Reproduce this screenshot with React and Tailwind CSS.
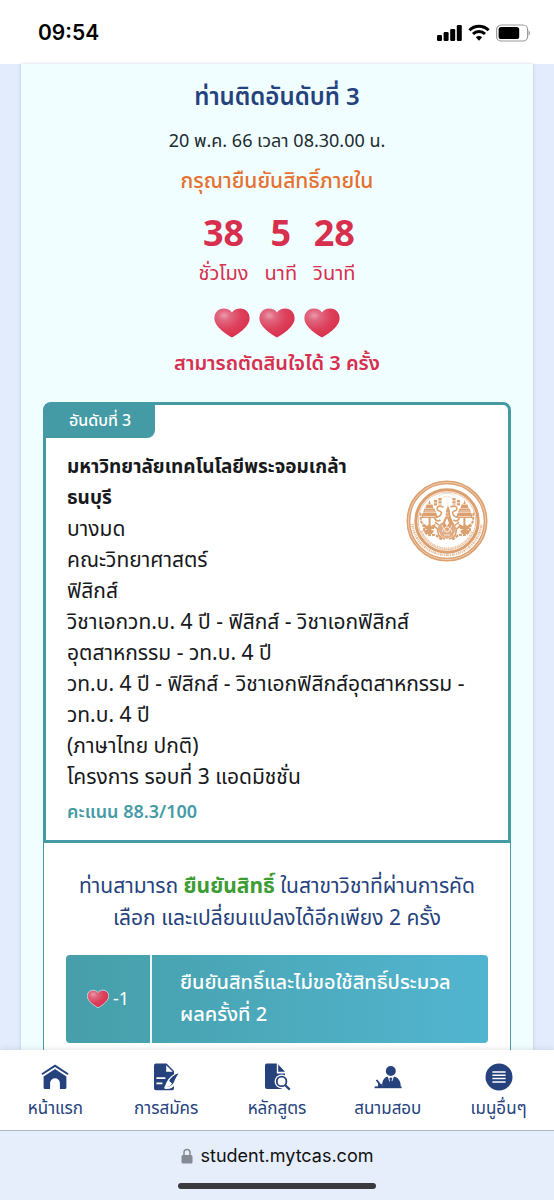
const thai = "font-['Noto_Sans_Thai','Noto_Sans',sans-serif]";

const countdown = [
  { value: 38, label: "ชั่วโมง" },
  { value: 5, label: "นาที" },
  { value: 28, label: "วินาที" },
];

const programLines = [
  "บางมด",
  "คณะวิทยาศาสตร์",
  "ฟิสิกส์",
  "วิชาเอกวท.บ. 4 ปี - ฟิสิกส์ - วิชาเอกฟิสิกส์",
  "อุตสาหกรรม - วท.บ. 4 ปี",
  "วท.บ. 4 ปี - ฟิสิกส์ - วิชาเอกฟิสิกส์อุตสาหกรรม -",
  "วท.บ. 4 ปี",
  "(ภาษาไทย ปกติ)",
  "โครงการ รอบที่ 3 แอดมิชชั่น",
];

const menu = [
  { label: "หน้าแรก", icon: HomeIcon },
  { label: "การสมัคร", icon: ApplyIcon },
  { label: "หลักสูตร", icon: CourseIcon },
  { label: "สนามสอบ", icon: ExamIcon },
  { label: "เมนูอื่นๆ", icon: MoreIcon },
];

function HomeIcon() {
  return (
    <svg viewBox="0 0 28 28" className="h-7 w-7" fill="currentColor">
      <path d="M14 1.6 27.6 10.4 26.600 12 14 4 1.400 12 .4 10.400Z" />
      <path d="M14 6 25.400 13.400V24.400q0 1.600-1.600 1.600H18.900V20.200a4.900 4.900 0 0 0-9.800 0V26H4.200Q2.600 26 2.600 24.400V13.400Z" />
    </svg>
  );
}

function ApplyIcon() {
  return (
    <svg viewBox="0 0 28 28" className="h-7 w-7" fill="currentColor">
      <path d="M4 .6h10.600l7.400 7.400V25.200a2 2 0 0 1-2 2H4a2 2 0 0 1-2-2V2.600a2 2 0 0 1 2-2Z" />
      <path d="M14.200 2.200v6.600h6.600Z" fill="#fff" />
      <path d="M4.400 15.200h9M4.400 20.400h6" stroke="#fff" strokeWidth="1.800" />
      <path
        d="M26.600 10.200c-5.600 2-9.200 5.400-11 9.400l-2.200 5.200c4.400.4 7.400-1.200 9.200-4.400Z"
        stroke="#fff"
        strokeWidth="2.200"
        strokeLinejoin="round"
      />
      <path d="M17.200 18.200c-1.800 1.600-2.200 3.600-2.600 5.600 3-.2 4.600-1.600 5.400-3.600Z" fill="#fff" />
      <path d="M26.600 10.200c-4.400 1.600-7.400 4-9.400 7.200l3.400 2.400Z" />
    </svg>
  );
}

function CourseIcon() {
  return (
    <svg viewBox="0 0 28 28" className="h-7 w-7" fill="currentColor">
      <path d="M4 .6h9.800v9.800H22v15.600H4a2 2 0 0 1-2-2V2.600a2 2 0 0 1 2-2Z" />
      <path d="m15.200 1.400 6.800 7.400H15.200Z" />
      <circle cx="18.600" cy="18.400" r="7" fill="#fff" />
      <path d="M18.400 26.800h6V18h-2Z" fill="#fff" />
      <circle cx="18.600" cy="18.400" r="4.800" fill="#fff" stroke="currentColor" strokeWidth="1.800" />
      <path d="m22 22 4.800 4.600" stroke="currentColor" strokeWidth="2.200" />
    </svg>
  );
}

function ExamIcon() {
  return (
    <svg viewBox="0 0 28 28" className="h-7 w-7" fill="currentColor">
      <circle cx="16.800" cy="8" r="5" />
      <path d="M.6 23.400h27v1.800H.6Z" />
      <path d="M8.200 24v-3.800q1.200-5.600 5.400-6.600l3.200 8.400 3.200-8.400q5 1 6.600 7.200V24Z" />
      <path d="m16.800 14.200 1.600 1.200-.8 1.800 1 3.200-1.800 2.200-1.800-2.200 1-3.200-.8-1.800Z" />
      <path d="m1.800 17.200 1.400-.6 3.400 4.200 1.600.6V24H3.800l.4-3.200Z" />
    </svg>
  );
}

function MoreIcon() {
  return (
    <svg viewBox="0 0 28 28" className="h-7 w-7" fill="currentColor">
      <circle cx="14" cy="14" r="13.500" />
      <path d="M7.400 9h13.200M7.400 12.300h13.200M7.400 15.600h13.200M7.400 18.900h13.200" stroke="#fff" strokeWidth="1.500" />
    </svg>
  );
}

function Heart({ className, outlined }) {
  return (
    <svg viewBox="0 0 36 30" className={className}>
      <defs>
        <radialGradient id="heart" cx="28%" cy="24%" r="80%">
          <stop offset="0" stopColor="#eb9aac" />
          <stop offset="0.220" stopColor="#e0677f" />
          <stop offset="0.600" stopColor="#dd405b" />
          <stop offset="1" stopColor="#d92f4c" />
        </radialGradient>
      </defs>
      <path
        d="M18 29.400C14.400 27.400 0.600 19.400.4 10.400.3 4.600 4.600.6 9.600.6c3.800 0 6.800 1.400 8.400 3.800C19.600 2 22.600.6 26.400.6c5 0 9.300 4 9.200 9.800C35.400 19.400 21.600 27.400 18 29.400Z"
        fill="url(#heart)"
        stroke={outlined ? "#b9d3dc" : "none"}
        strokeWidth="1.600"
      />
    </svg>
  );
}

function StatusBar() {
  return (
    <header className="flex h-16 shrink-0 items-center justify-between bg-white pt-[2px] pr-6 pl-[38px] text-black">
      <time className="font-['Inter',sans-serif] text-[21px] font-semibold">09:54</time>
      <svg viewBox="0 0 96 20" className="h-5 w-24" fill="currentColor">
        <rect x="3" y="12" width="5" height="6" rx="1.300" />
        <rect x="9.600" y="9" width="5" height="9" rx="1.300" />
        <rect x="16.200" y="6" width="5" height="12" rx="1.300" />
        <rect x="22.800" y="2" width="5" height="16" rx="1.300" />
        <g fill="none" stroke="currentColor" strokeWidth="3">
          <path d="M35.400 7.200a13.600 13.600 0 0 1 19.200 0" />
          <path d="M39 11a8.500 8.500 0 0 1 12 0" />
        </g>
        <path d="M41.800 14.200a4.600 4.600 0 0 1 6.400 0L45 17.800Z" />
        <rect x="62.600" y="2" width="31" height="16" rx="4.600" fill="none" stroke="#9a9a9a" strokeWidth="1.200" />
        <rect x="64.600" y="4" width="20.600" height="12" rx="2.600" />
        <path d="M94.600 7.600q1.400.6 1.400 2.400t-1.400 2.400Z" fill="#9a9a9a" />
      </svg>
    </header>
  );
}

// one tiered parasol with its base, mirrored for the right-hand side of the seal
function Parasol() {
  return (
    <g fill="#dc9f6e" stroke="none">
      <path d="m23.500 20 1.200 4h-2.400ZM20.500 24.500h6l1 3.500h-8ZM18.500 28.500h10l1.500 4H17ZM16.500 33h14l1 5H15.500Z" />
      <path d="M22.600 38h2v16h-2ZM17 43l4 3 2-2 2.500 2 4.500-3-2 6h-9ZM18 51l5-3 5 3-2 3h-6Z" />
      <path d="M17 36.500h13M18.500 31h10" stroke="#fff" strokeWidth="0.600" />
    </g>
  );
}

function UniversitySeal() {
  return (
    <svg
      viewBox="0 0 82 82"
      className="h-[82px] w-[82px] shrink-0"
      fill="none"
      stroke="#dc9f6e"
      role="img"
      aria-label="มหาวิทยาลัยเทคโนโลยีพระจอมเกล้าธนบุรี"
    >
      <circle cx="41" cy="41" r="38.600" strokeWidth="3.800" />
      <circle cx="41" cy="41" r="38.600" stroke="#f6e4d5" strokeWidth="0.700" />
      <circle cx="41" cy="41" r="31.200" strokeWidth="3" />
      <circle cx="41" cy="41" r="28.800" strokeWidth="0.600" />
      <path d="M6.400 44a34.800 34.800 0 0 0 69.200 0" strokeWidth="2.400" strokeDasharray="1 .9 1.700 .7 .8 .9" opacity="0.700" />
      <path d="M15.500 51a27.400 27.400 0 0 0 51 0" strokeWidth="1.800" strokeDasharray="1.400 .8 .8 .7" opacity="0.700" />
      <Parasol />
      <g transform="matrix(-1 0 0 1 82 0)">
        <Parasol />
      </g>
      <g fill="#dc9f6e" stroke="none">
        <path d="m41 15 .9 10 1.800 5 1 7 3.300 7-2 5h-8l-2-5 3.300-7 1-7 1.800-5Z" />
        <path d="M35 43h12l3.500 5-3.500 8-6 3-6-3-3.500-8Z" opacity="0.850" />
      </g>
      <g strokeWidth="1.600">
        <path d="M34 18v7M48 18v7M29.500 20v6M52.500 20v6" strokeWidth="3.200" strokeDasharray="2.400 .8" />
        <path d="M37.500 27c-7-3-8 3-4 4s1 6-3 6 0 6 4 3M44.500 27c7-3 8 3 4 4s-1 6 3 6 0 6-4 3" />
        <path d="M14 33c2 3 0 5 1 8s3 4 3 8 5 7 9 6 5 4 9 4M68 33c-2 3 0 5-1 8s-3 4-3 8-5 7-9 6-5 4-9 4" strokeWidth="2" strokeDasharray="3 1" />
        <path d="M26 46q6 1 6 6t7 7M56 46q-6 1-6 6t-7 7M29 42l5 4M53 42l-5 4" />
      </g>
      <path d="m41 38-2 5 2 3 2-3Z" fill="#fff" stroke="none" />
      <circle cx="41" cy="49.500" r="2.600" stroke="#fff" strokeWidth="0.900" />
      <path d="M36 45q3 4 0 7M46 45q-3 4 0 7M38 55h6M39.500 33h3M39 36h4" stroke="#fff" strokeWidth="0.700" />
      <path d="M33 16q8-5 16 0M35 18.500q6-4 12 0" strokeWidth="0.800" strokeDasharray="1 .8" opacity="0.700" />
    </svg>
  );
}

function Countdown() {
  return (
    <div className="mt-3 flex justify-center gap-4 text-[#d72f4d]">
      {countdown.map((unit) => (
        <div key={unit.label} className="text-center">
          <p className="text-[36px] leading-[50px] font-bold">{unit.value}</p>
          <p className="text-[20px] leading-7">{unit.label}</p>
        </div>
      ))}
    </div>
  );
}

function ProgramCard() {
  return (
    <article className="rounded-t-lg border-3 border-[#459ba5] bg-white pb-3">
      <span className="-mt-px -ml-px inline-block rounded-br-lg bg-[#459ba5] px-6 text-[16px] leading-[34px] font-medium text-white">
        อันดับที่ 3
      </span>
      <div className="flex items-start pt-[14px] pr-5 pl-[21px] text-[21px] leading-[31px] text-[#17191c]">
        <div className="min-w-0 flex-1">
          <h2 className="text-[19px] font-bold">
            มหาวิทยาลัยเทคโนโลยีพระจอมเกล้า
            <br />
            ธนบุรี
          </h2>
          {programLines.map((line) => (
            <p key={line} className="whitespace-nowrap">
              {line}
            </p>
          ))}
          <p className="pt-1 text-[18px] font-semibold text-[#459ba5]">คะแนน 88.3/100</p>
        </div>
        <div className="pt-7">
          <UniversitySeal />
        </div>
      </div>
    </article>
  );
}

function ConfirmPanel() {
  return (
    <div className="flex-1 border-x border-[#459ba5] bg-white px-[22px] pt-7 pb-1">
      <p className="text-center text-[21px] leading-8 text-[#25427d]">
        ท่านสามารถ <strong className="text-[#3d9c34]">ยืนยันสิทธิ์</strong> ในสาขาวิชาที่ผ่านการคัด
        <br />
        เลือก และเปลี่ยนแปลงได้อีกเพียง 2 ครั้ง
      </p>
      <button
        type="button"
        className="mt-5 flex h-[88px] w-full items-stretch rounded-sm bg-linear-to-r from-[#469fa9] to-[#52b5d0] text-left text-white"
      >
        <span className="flex w-[86px] items-center justify-center gap-1 border-r-2 border-white/90 text-[18px]">
          <Heart className="h-5 w-[22px]" outlined />
          -1
        </span>
        <span className="flex flex-1 items-center pl-7 text-[20px] leading-8 font-medium">
          ยืนยันสิทธิ์และไม่ขอใช้สิทธิ์ประมวล
          <br />
          ผลครั้งที่ 2
        </span>
      </button>
    </div>
  );
}

function BottomBar() {
  return (
    <footer className="sticky bottom-0 shrink-0">
      <nav className="grid h-20 grid-cols-5 bg-white text-[#25427d] shadow-[0_-1px_6px_rgba(0,0,0,0.1)]">
        {menu.map(({ label, icon: Icon }) => (
          <a key={label} href="#" className="flex flex-col items-center gap-1 pt-[13px]">
            <Icon />
            <span className="text-[17px] leading-7">{label}</span>
          </a>
        ))}
      </nav>
      <div className="flex h-[70px] flex-col items-center justify-between border-t border-[#adb4c2] bg-[#e6eefb] pt-[11px] pb-[11px]">
        <div className="flex items-center gap-2 font-['Inter',sans-serif] text-[18px] leading-7 text-[#111]">
          <svg viewBox="0 0 12 16" className="h-4 w-3">
            <path d="M3 8V4.600a3 3 0 0 1 6 0V8" fill="none" stroke="#858a93" strokeWidth="1.500" />
            <rect x="0.500" y="7" width="11" height="8.500" rx="1.500" fill="#858a93" />
          </svg>
          student.mytcas.com
        </div>
        <div className="h-[6px] w-[198px] rounded-full bg-[#3a3a3c]" />
      </div>
    </footer>
  );
}

export default function App() {
  return (
    <div className={`flex min-h-screen flex-col bg-[#e3ecfd] ${thai}`}>
      <StatusBar />
      <main className="mx-[21px] flex flex-1 flex-col bg-[#f0feff] px-[22px] shadow-[0_0_3px_rgba(80,110,160,0.3)]">
        <section className="pt-[14px] text-center">
          <h1 className="text-[24px] leading-10 font-semibold text-[#25427d]">ท่านติดอันดับที่ 3</h1>
          <p className="mt-[10px] text-[18px] leading-7 text-[#1d2b30]">20 พ.ค. 66 เวลา 08.30.00 น.</p>
          <p className="mt-[10px] text-[21px] leading-8 font-medium text-[#e5702f]">กรุณายืนยันสิทธิ์ภายใน</p>
          <Countdown />
          <div className="mt-5 flex justify-center gap-[9px]">
            <Heart className="h-[30px] w-9" />
            <Heart className="h-[30px] w-9" />
            <Heart className="h-[30px] w-9" />
          </div>
          <p className="mt-2 text-[20px] leading-9 font-semibold text-[#d72f4d]">สามารถตัดสินใจได้ 3 ครั้ง</p>
        </section>
        <section className="mt-5 flex flex-1 flex-col">
          <ProgramCard />
          <ConfirmPanel />
        </section>
      </main>
      <BottomBar />
    </div>
  );
}
